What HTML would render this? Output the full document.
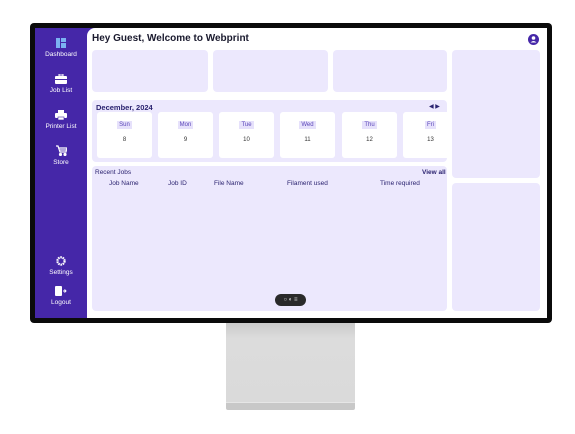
<!DOCTYPE html><html><head><style>
*{margin:0;padding:0;box-sizing:border-box}
body{width:575px;height:434px;background:#fff;font-family:"Liberation Sans",sans-serif;position:relative;overflow:hidden}
.a{position:absolute}
.bez{left:30px;top:23px;width:522px;height:300px;background:#0b0b0b;border-radius:4px}
.scr{left:35px;top:28px;width:512px;height:290px;background:#4527a8;overflow:hidden}
.main{left:52px;top:0;width:460px;height:290px;background:#fff;border-radius:8px 0 0 0}
.p{background:#ece8fd;border-radius:4px}
.nav{width:52px;text-align:center;color:#fff;font-size:6.5px}
.nav svg{display:block;margin:0 auto 3px}
.day{background:#fff;border-radius:3px;width:55px;height:46px;top:12px;text-align:center;font-size:6px;color:#333}
.day b{display:inline-block;font-weight:normal;background:#e6e1fb;color:#5a45b8;padding:1px 2px;margin-top:9px}
.day i{display:block;font-style:normal;margin-top:8px}
.th{font-size:6.5px;color:#2b2370;top:14px}
</style></head><body>
<div class="a" style="left:226px;top:322px;width:129px;height:82px;background:linear-gradient(#c9c9c9,#dcdcdc 20%,#dadada)"></div>
<div class="a" style="left:226px;top:402px;width:129px;height:8px;background:#c8c8c8;border-top:1px solid #e6e6e6;border-radius:0 0 2px 2px"></div>
<div class="a bez"></div>
<div class="a scr">
 <div class="a nav" style="top:10px"><svg width="10" height="10" viewBox="0 0 10 10"><rect x="0" y="0" width="4" height="10" fill="#7bb2f2"/><rect x="5" y="0" width="5" height="4" fill="#7bb2f2"/><rect x="5" y="5" width="5" height="5" fill="#7bb2f2"/></svg>Dashboard</div>
 <div class="a nav" style="top:46px"><svg width="12" height="10" viewBox="0 0 12 10"><rect x="4" y="0" width="4" height="2" fill="none" stroke="#fff"/><rect x="0" y="2" width="12" height="8" rx="1" fill="#fff"/><rect x="0" y="5" width="12" height="1" fill="#4527a8"/></svg>Job List</div>
 <div class="a nav" style="top:82px"><svg width="12" height="10" viewBox="0 0 12 10"><rect x="3" y="0" width="6" height="3" fill="#fff"/><rect x="0" y="3" width="12" height="5" rx="1" fill="#fff"/><rect x="3" y="7" width="6" height="3" fill="#fff" stroke="#4527a8" stroke-width=".6"/></svg>Printer List</div>
 <div class="a nav" style="top:117px"><svg width="11" height="11" viewBox="0 0 11 11" fill="none" stroke="#fff" stroke-width="1.2"><path d="M0 1h2l2 6h6l1-4H3"/><path d="M4 5h6"/><circle cx="4.5" cy="9.5" r="1" fill="#fff"/><circle cx="9" cy="9.5" r="1" fill="#fff"/></svg>Store</div>
 <div class="a nav" style="top:228px"><svg width="10" height="10" viewBox="0 0 10 10"><circle cx="5" cy="5" r="3.6" fill="none" stroke="#fff" stroke-width="2.2" stroke-dasharray="1.6 0.7"/><circle cx="5" cy="5" r="1.2" fill="#4527a8"/></svg>Settings</div>
 <div class="a nav" style="top:258px"><svg width="12" height="10" viewBox="0 0 12 10"><rect x="0" y="0" width="7" height="10" rx="1" fill="#fff"/><path d="M8 5h3M9.5 3.5L11 5 9.5 6.5" stroke="#fff" fill="none"/></svg>Logout</div>
 <div class="a main">
  <div class="a" style="left:5px;top:5px;font-size:10px;font-weight:bold;color:#1a1a2e">Hey Guest, Welcome to Webprint</div>
  <svg class="a" style="left:441px;top:6px" width="11" height="11" viewBox="0 0 11 11"><circle cx="5.5" cy="5.5" r="5.5" fill="#4527a8"/><circle cx="5.5" cy="4" r="1.8" fill="#fff"/><path d="M2.5 8.5q3-3 6 0" fill="#fff"/></svg>
  <div class="a p" style="left:5px;top:22px;width:116px;height:42px"></div>
  <div class="a p" style="left:126px;top:22px;width:115px;height:42px"></div>
  <div class="a p" style="left:246px;top:22px;width:114px;height:42px"></div>
  <div class="a p" style="left:365px;top:22px;width:88px;height:128px"></div>
  <div class="a p" style="left:365px;top:155px;width:88px;height:128px"></div>
  <div class="a p" style="left:5px;top:72px;width:355px;height:62px;overflow:hidden">
   <div class="a" style="left:4px;top:3px;font-size:7.5px;font-weight:bold;color:#2b2370">December, 2024</div>
   <div class="a" style="left:337px;top:3px;font-size:6px;color:#2b2370">◀ ▶</div>
   <div class="a day" style="left:5px"><b>Sun</b><i>8</i></div>
   <div class="a day" style="left:66px"><b>Mon</b><i>9</i></div>
   <div class="a day" style="left:127px"><b>Tue</b><i>10</i></div>
   <div class="a day" style="left:188px"><b>Wed</b><i>11</i></div>
   <div class="a day" style="left:250px"><b>Thu</b><i>12</i></div>
   <div class="a day" style="left:311px"><b>Fri</b><i>13</i></div>
  </div>
  <div class="a p" style="left:5px;top:138px;width:355px;height:145px">
   <div class="a" style="left:3px;top:3px;font-size:6.5px;color:#2b2370">Recent Jobs</div>
   <div class="a" style="left:330px;top:3px;font-size:6.5px;font-weight:bold;color:#2b2370">View all</div>
   <div class="a th" style="left:17px">Job Name</div>
   <div class="a th" style="left:76px">Job ID</div>
   <div class="a th" style="left:122px">File Name</div>
   <div class="a th" style="left:195px">Filament used</div>
   <div class="a th" style="left:288px">Time required</div>
  </div>
  <div class="a" style="left:188px;top:266px;width:31px;height:12px;border-radius:6px;background:#2a2a2a;color:#ddd;font-size:6px;text-align:center;line-height:12px">○ ◐ ≡</div>
 </div>
</div>
</body></html>
